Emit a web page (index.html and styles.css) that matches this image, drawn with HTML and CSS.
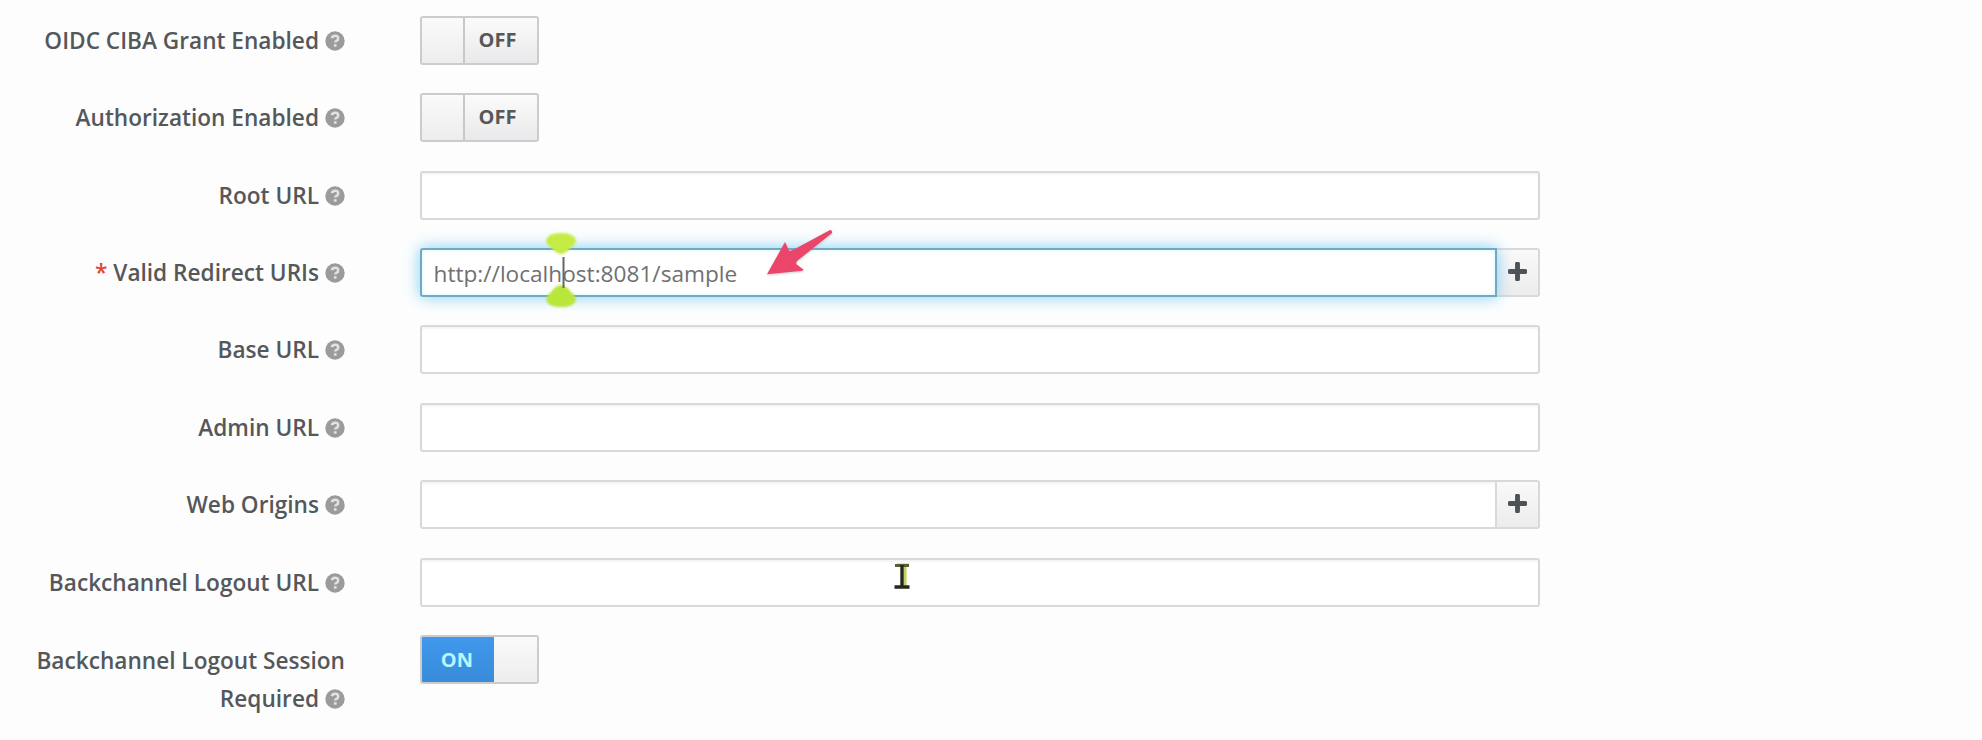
FILE: index.html
```html
<!DOCTYPE html>
<html lang="en">
<head>
<meta charset="utf-8">
<title>Client settings</title>
<link rel="stylesheet" href="styles.css">
</head>
<body>
<svg class="defs" aria-hidden="true">
  <symbol id="help" viewBox="0 0 20 20">
    <circle cx="10" cy="10" r="9.7" fill="#9b9b9b"/>
    <path d="M6.8 7.2Q7.6 4.8 10.2 4.8Q13.2 4.8 13.2 7.4Q13.2 9 11.4 9.8Q10.2 10.4 10.2 11.6" fill="none" stroke="#e2e2e2" stroke-width="2.5"/>
    <path d="M8.9 13.2h2.7v2.5H8.9z" fill="#e2e2e2"/>
  </symbol>
  <symbol id="plus" viewBox="0 0 18 18">
    <path d="M9 1.8v14.4M1.8 9h14.4" fill="none" stroke="#4d5258" stroke-width="4.6" stroke-linecap="round"/>
  </symbol>
</svg>
<form class="settings">
  <div class="row">
    <label class="label"><span class="name">OIDC CIBA Grant Enabled</span><svg class="help"><use href="#help"/></svg></label>
    <div class="switch"><span class="knob"></span><span class="off">OFF</span></div>
  </div>
  <div class="row">
    <label class="label"><span class="name">Authorization Enabled</span><svg class="help"><use href="#help"/></svg></label>
    <div class="switch"><span class="knob"></span><span class="off">OFF</span></div>
  </div>
  <div class="row">
    <label class="label"><span class="name">Root URL</span><svg class="help"><use href="#help"/></svg></label>
    <div class="field"><div class="input"></div></div>
  </div>
  <div class="row">
    <label class="label"><span class="required">*</span><span class="name">Valid Redirect URIs</span><svg class="help"><use href="#help"/></svg></label>
    <div class="field">
      <div class="input grouped focused"><span class="value">http://localhost:8081/sample</span></div>
      <div class="addon"><svg class="plus"><use href="#plus"/></svg></div>
      <svg class="caret" viewBox="0 0 32 82">
        <g class="handles">
          <path d="M1 12Q2 4 16 4Q30 4 31 12Q30 16 26 18Q21 25 16 25Q11 25 6 18Q2 16 1 12Z" fill="#c5ec45"/>
          <path d="M1 70Q2 78 16 78Q30 78 31 70Q30 66 26 63Q21 56 16 56Q11 56 6 63Q2 66 1 70Z" fill="#b9e63b"/>
        </g>
        <path d="M18.5 28v31" stroke="#666" stroke-width="2"/>
      </svg>
      <svg class="arrow" viewBox="0 0 70 50">
        <path d="M2 47.3L20 15L24 23.5Q26 24 29 22.5L65 3Q67.5 3 67 6L32 34Q30 37 33 38.5L38.5 42.5Q38 44 35 44Z" fill="#ec456c"/>
      </svg>
    </div>
  </div>
  <div class="row">
    <label class="label"><span class="name">Base URL</span><svg class="help"><use href="#help"/></svg></label>
    <div class="field"><div class="input"></div></div>
  </div>
  <div class="row">
    <label class="label"><span class="name">Admin URL</span><svg class="help"><use href="#help"/></svg></label>
    <div class="field"><div class="input"></div></div>
  </div>
  <div class="row">
    <label class="label"><span class="name">Web Origins</span><svg class="help"><use href="#help"/></svg></label>
    <div class="field">
      <div class="input grouped"></div>
      <div class="addon"><svg class="plus"><use href="#plus"/></svg></div>
    </div>
  </div>
  <div class="row">
    <label class="label"><span class="name">Backchannel Logout URL</span><svg class="help"><use href="#help"/></svg></label>
    <div class="field">
      <div class="input"></div>
      <svg class="pointer" viewBox="0 0 18 30">
        <path d="M4 4h12M12 5v20" stroke="#c0cf60" stroke-width="3" fill="none"/>
        <path d="M2 4.5h14" stroke="#596030" stroke-width="3"/>
        <path d="M9 4v21M1.5 26h15" stroke="#25281c" stroke-width="3.4" fill="none"/>
      </svg>
    </div>
  </div>
  <div class="row">
    <label class="label wrapped"><span class="name">Backchannel Logout Session</span><span class="line"><span class="name">Required</span><svg class="help"><use href="#help"/></svg></span></label>
    <div class="switch"><span class="on">ON</span><span class="knob right"></span></div>
  </div>
</form>
</body>
</html>
```
FILE: styles.css
```css
* { box-sizing: border-box; }
body {
  margin: 0;
  height: 740px;
  overflow: hidden;
  background: #fdfdfd;
  color: #55585b;
  font: 400 22.64px/38px "Open Sans", sans-serif;
}
.defs { position: absolute; width: 0; height: 0; }
.settings {
  display: grid;
  grid-auto-rows: 77.36px;
  padding-top: 16px;
}
.row {
  display: grid;
  grid-template-columns: 345px 1120px;
  column-gap: 74.5px;
  align-items: start;
}
.label {
  display: flex;
  justify-content: flex-end;
  align-items: center;
  padding-top: 6px;
  font-weight: 600;
  white-space: nowrap;
}
.wrapped { flex-direction: column; align-items: flex-end; padding-top: 7px; }
.line { display: flex; align-items: center; }
.required { margin-right: 6px; color: #e0453b; }
.help { width: 20px; height: 20px; margin-left: 6px; flex: none; }
.switch {
  display: flex;
  width: 119px;
  height: 49px;
  border: 2px solid #ccc;
  border-radius: 3px;
  background: linear-gradient(#fbfbfb, #e9e9eb);
  font-size: 20px;
  font-weight: 700;
  line-height: 44px;
  text-align: center;
  overflow: hidden;
}
.knob { width: 43px; border-right: 2px solid #c8c8c8; background: linear-gradient(#fafafa, #ededed); }
.knob.right { border: 0; }
.off { flex: 1; padding-right: 6px; }
.on {
  width: 76px;
  margin: -2px 0 -2px -2px;
  line-height: 49px;
  background: linear-gradient(#4099ec, #388bd8);
  color: #b8f6ff;
}
.field { display: flex; position: relative; height: 49px; }
.input {
  flex: 1;
  border: 2px solid #d9d9d9;
  border-radius: 3px;
  background: #fff;
  box-shadow: inset 0 2px 2px #f5f5f5;
}
.grouped { border-radius: 3px 0 0 3px; }
.focused {
  position: relative;
  z-index: 1;
  border-color: #6faac5;
  box-shadow: inset 0 0 4px #d4f5ff, 0 0 16px #7fcdf3;
}
.value { display: block; padding: 5px 0 0 12px; color: #707070; }
.addon {
  display: flex;
  align-items: center;
  justify-content: center;
  width: 43px;
  border: 2px solid #d9d9d9;
  border-left: 0;
  border-radius: 0 3px 3px 0;
  background: linear-gradient(#f9f9f9, #ececec);
}
.plus { width: 19px; height: 19px; margin-top: -2px; }
.caret { position: absolute; z-index: 2; left: 125px; top: -19px; width: 32px; height: 82px; }
.handles { filter: blur(0.8px); }
.arrow { position: absolute; z-index: 2; left: 345px; top: -21px; width: 70px; height: 50px; filter: drop-shadow(0 1px 1px #9998); }
.pointer { position: absolute; left: 473px; top: 3px; width: 18px; height: 30px; }
```
